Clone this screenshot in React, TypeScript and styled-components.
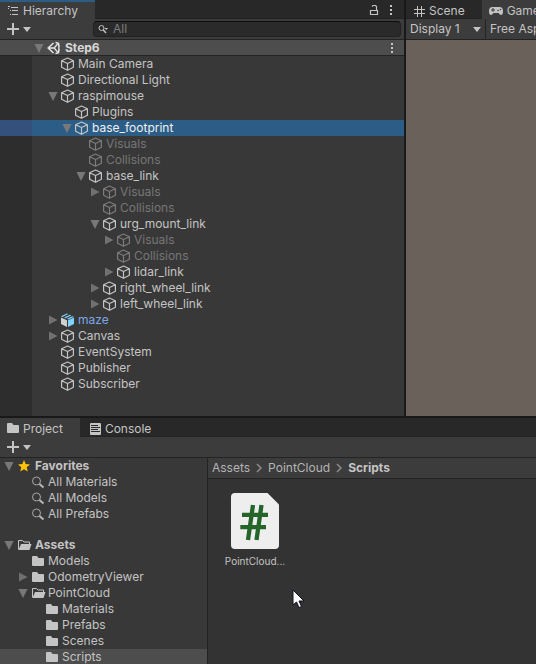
import React from "react";
import styled, { createGlobalStyle, css } from "styled-components";

const color = {
  frame: "#191919",
  tabBar: "#282828",
  toolbar: "#3c3c3c",
  panel: "#383838",
  gutter: "#2d2d2d",
  line: "#232323",
  text: "#c4c4c4",
  bright: "#d8d8d8",
  dim: "#767676",
  highlight: "#4d4d4d",
  selected: "#2c5d87",
  prefab: "#7ba6e6",
  game: "#6a615b",
};

const GlobalStyle = createGlobalStyle`
  * { box-sizing: border-box; }
  body {
    margin: 0;
    background: ${color.frame};
    color: ${color.text};
    font: 12px/16px Inter, "Liberation Sans", sans-serif;
  }
  button, input, select {
    font: inherit;
    color: inherit;
    border: 0;
    margin: 0;
    padding: 0;
    background: none;
  }
  ul { list-style: none; margin: 0; padding: 0; }
  svg { display: block; flex: none; }
`;

const Editor = styled.main`
  height: 100vh;
  overflow: hidden;
  display: flex;
  flex-direction: column;
  gap: 2px;
`;

const TopDock = styled.div`
  flex: none;
  display: grid;
  grid-template-columns: minmax(0, 1fr) 130px;
  gap: 2px;
`;

const Pane = styled.section`
  display: flex;
  flex-direction: column;
  min-width: 0;
  overflow: hidden;
  background: ${color.panel};
`;

const ProjectPane = styled(Pane)`
  flex: 1;
  min-height: 0;
`;

const TabBar = styled.div`
  display: flex;
  flex: none;
  height: 19px;
  background: ${color.tabBar};
  box-shadow: inset 0 -1px ${color.line};
`;

const Tab = styled.button<{ $active?: boolean; $focused?: boolean; $inset?: number }>`
  display: flex;
  align-items: center;
  flex: none;
  gap: 4px;
  padding: 3px 17px 0 ${(p) => p.$inset ?? 7}px;
  white-space: nowrap;
  ${(p) => p.$active && css`background: ${color.toolbar};`}
  ${(p) => p.$focused && css`box-shadow: inset 0 2px ${color.selected};`}
`;

const TabActions = styled.div`
  display: flex;
  align-items: center;
  gap: 10px;
  margin-left: auto;
  padding-right: 11px;
`;

const IconButton = styled.button`
  display: flex;
  align-items: center;
  gap: 4px;
`;

const Toolbar = styled.div`
  display: flex;
  align-items: center;
  justify-content: space-between;
  flex: none;
  gap: 62px;
  height: 21px;
  padding: 0 3px 0 7px;
  background: ${color.toolbar};
  border-bottom: 1px solid ${color.line};
`;

const SearchBox = styled.label`
  display: flex;
  align-items: center;
  gap: 5px;
  flex: 1;
  height: 16px;
  padding-left: 4px;
  border: 1px solid #212121;
  border-top-color: #0d0d0d;
  border-radius: 4px;
  background: #2a2a2a;
`;

const SearchInput = styled.input`
  flex: 1;
  min-width: 0;
  height: 14px;
  outline: 0;
  &::placeholder { color: #7d7d7d; opacity: 1; }
`;

const HierarchyTree = styled.ul`
  flex: 1;
  padding-bottom: 24px;
  background: linear-gradient(to right, ${color.gutter} 32px, ${color.panel} 32px);
`;

const Row = styled.li<{ $indent: number; $state?: "scene" | "selected" | "current" }>`
  display: flex;
  align-items: center;
  height: 16px;
  padding-left: ${(p) => p.$indent}px;
  padding-right: 10px;
  ${(p) => p.$state === "scene" && css`
    background: ${color.highlight};
    box-shadow: inset 0 -1px ${color.line};
  `}
  ${(p) => p.$state === "selected" && css`
    background: linear-gradient(to right, #34507c 32px, ${color.selected} 32px);
  `}
  ${(p) => p.$state === "current" && css`background: ${color.highlight};`}
`;

const FoldSlot = styled.span`
  display: flex;
  flex: none;
  width: 14px;
`;

const FoldButton = styled.button`
  display: flex;
  width: 14px;
  height: 16px;
  align-items: center;
  justify-content: center;
`;

const RowLabel = styled.button<{ $tone?: string; $bold?: boolean; $gap?: number }>`
  display: flex;
  align-items: center;
  flex: 1;
  gap: ${(p) => p.$gap ?? 2}px;
  height: 16px;
  white-space: nowrap;
  color: ${(p) => p.$tone ?? color.text};
  font-weight: ${(p) => (p.$bold ? 700 : 400)};
`;

const GameBar = styled.div`
  display: flex;
  flex: none;
  height: 21px;
  background: ${color.toolbar};
  border-bottom: 1px solid ${color.line};
`;

const Dropdown = styled.label<{ $width: number }>`
  display: flex;
  align-items: center;
  flex: none;
  width: ${(p) => p.$width}px;
  padding: 0 4px;
  border-right: 1px solid ${color.line};
`;

const Select = styled.select`
  appearance: none;
  flex: 1;
  min-width: 0;
  outline: 0;
`;

const GameView = styled.div`
  flex: 1;
  background: ${color.game};
`;

const ProjectBody = styled.div`
  flex: 1;
  min-height: 0;
  display: grid;
  grid-template-columns: 208px minmax(0, 1fr);
`;

const Folders = styled.nav`
  display: flex;
  flex-direction: column;
  gap: 15px;
  overflow: hidden;
  border-right: 1px solid ${color.line};
`;

const Browser = styled.div`
  display: flex;
  flex-direction: column;
  min-width: 0;
`;

const Breadcrumb = styled.nav`
  display: flex;
  align-items: center;
  flex: none;
  gap: 6px;
  height: 21px;
  padding-left: 4px;
  background: ${color.toolbar};
  border-bottom: 1px solid ${color.line};
`;

const Crumb = styled.a<{ $current?: boolean }>`
  color: ${(p) => (p.$current ? color.text : "#b4b4b4")};
  font-weight: ${(p) => (p.$current ? 700 : 400)};
  text-decoration: none;
`;

const Files = styled.div`
  position: relative;
  flex: 1;
  padding: 14px 15px;
  background: #333333;
`;

const FileTile = styled.button`
  display: flex;
  flex-direction: column;
  align-items: center;
  gap: 4px;
  width: 64px;
  font-size: 10px;
  white-space: nowrap;
`;

const Pointer = styled.svg`
  position: absolute;
  left: 84px;
  top: 110px;
`;

const Plus = () => (
  <svg width="12" height="12" viewBox="0 0 12 12">
    <path d="M6 0v12M0 6h12" stroke="#c4c4c4" strokeWidth="2" />
  </svg>
);

const Caret = () => (
  <svg width="8" height="5" viewBox="0 0 8 5">
    <path d="M0 0h8L4 5z" fill="#c4c4c4" />
  </svg>
);

const Dots = () => (
  <svg width="4" height="12" viewBox="0 0 4 12">
    <path d="M1 1h2v2H1zM1 5h2v2H1zM1 9h2v2H1z" fill="#c4c4c4" />
  </svg>
);

const LockIcon = () => (
  <svg width="10" height="12" viewBox="0 0 10 12">
    <path d="M1.500 6.500h7v4h-7zM7.500 6V2.500L6.500 1.500H4L3 2.500" fill="none" stroke="#c4c4c4" strokeWidth="1.200" />
  </svg>
);

const HierarchyIcon = () => (
  <svg width="12" height="12" viewBox="0 0 12 12">
    <path d="M1 1.500h2M4 2.500h7M3 5.500h1M5 5.500h6M3 9.500h1M5 9.500h6M1.500 3v1" fill="none" stroke="#c4c4c4" />
  </svg>
);

const SearchIcon = () => (
  <svg width="10" height="10" viewBox="0 0 10 10">
    <circle cx="3.500" cy="4" r="2.500" fill="none" stroke="#c4c4c4" />
    <path d="M5.300 6l2.700 3" stroke="#c4c4c4" strokeWidth="1.500" />
    <path d="M6.500 4h3.500L8.200 6z" fill="#c4c4c4" />
  </svg>
);

const Lens = () => (
  <svg width="16" height="16" viewBox="0 0 16 16">
    <circle cx="6.500" cy="7" r="4" fill="none" stroke="#a8a8a8" />
    <path d="M9.500 10l4 3.500" stroke="#b8b8b8" strokeWidth="2" />
  </svg>
);

const Triangle = ({ open }: { open: boolean }) => (
  <svg width="10" height="10" viewBox="0 0 10 10">
    <path d={open ? "M.5 1h9L5 10z" : "M1 .5v9L9.500 5z"} fill={open ? "#787878" : "#707070"} />
  </svg>
);

const Cube = ({ stroke }: { stroke: string }) => (
  <svg width="16" height="16" viewBox="0 0 16 16">
    <path d="M7.500 2L13.400 4.700v6.600L7.500 14.200 1.600 11.300V4.700zM1.600 4.700l5.900 2.800 5.900-2.800M7.500 7.500v6.700" fill="none" stroke={stroke} strokeWidth="1.200" strokeLinejoin="round" />
  </svg>
);

const PrefabCube = () => (
  <svg width="16" height="16" viewBox="0 0 16 16">
    <path d="M1 5.500l6 2.700V15l-6-3z" fill="#d0d0d0" />
    <path d="M8 8.200L14 5.500V12l-6 3z" fill="#7ed3ff" />
    <path d="M1 4.200L7 1.500l1.300.6L2.500 4.900zM4 5.500l6-2.700 1.300.6-5.800 2.800zM7 6.800l5.300-2.600 1.700.6-5.500 2.700z" fill="#7ed3ff" />
  </svg>
);

const UnityLogo = () => (
  <svg width="16" height="16" viewBox="0 0 16 16">
    <path d="M7.500 3L2.200 8l5.300 5M9.500 2.600l3 .7.400 3.200M9.500 13.400l3-.7.400-3.200" fill="none" stroke="#e8e8e8" strokeWidth="1.500" />
    <path d="M2.500 8h5.700M8.200 8l3.900-4.700M8.200 8l3.900 4.700M12.900 5.500v5" fill="none" stroke="#e8e8e8" strokeWidth="1.300" />
  </svg>
);

const Star = () => (
  <svg width="16" height="16" viewBox="0 0 16 16">
    <path d="M8 2l1.700 4.100 4.300.3-3.300 2.800 1.100 4.300L8 11.200l-3.800 2.300 1.100-4.300L2 6.400l4.300-.3z" fill="#ffc107" />
  </svg>
);

const Folder = ({ size = 16 }: { size?: number }) => (
  <svg width={size} height="16" viewBox={size === 16 ? "0 0 16 16" : "2 1 12 16"}>
    <path d="M2 4q0-1 1-1h4l1.500 2H13q1 0 1 1v6q0 1-1 1H3q-1 0-1-1z" fill="#c4c4c4" />
  </svg>
);

const OpenFolder = () => (
  <svg width="16" height="16" viewBox="0 0 16 16">
    <path d="M2.500 12.500v-9h4L8 5h5.500v2" fill="none" stroke="#c4c4c4" />
    <path d="M5 7h10.500l-2 6H2.500z" fill="#c4c4c4" />
  </svg>
);

const ConsoleIcon = () => (
  <svg width="11" height="12" viewBox="0 0 11 12">
    <rect width="11" height="12" rx="1" fill="#c4c4c4" />
    <path d="M1 2.500h7M1 4.500h9M1 6.500h7M1 8.500h9" stroke="#282828" />
  </svg>
);

const GridIcon = () => (
  <svg width="12" height="12" viewBox="0 0 12 12">
    <path d="M4.500 1v11M8.500 1v11M1 4.500h11M1 8.500h11" stroke="#c4c4c4" />
  </svg>
);

const Gamepad = () => (
  <svg width="14" height="10" viewBox="0 0 14 10">
    <path d="M3.500 1h7Q14 1 14 5t-2 4q-1 0-2.500-2h-5Q3 9 2 9 0 9 0 5t3.500-4z" fill="#c4c4c4" />
    <path d="M2 4h4M4 2v4" stroke="#3c3c3c" />
    <circle cx="9" cy="4.500" r=".8" fill="#3c3c3c" />
    <circle cx="11.500" cy="3.500" r=".8" fill="#3c3c3c" />
  </svg>
);

const Chevron = () => (
  <svg width="6" height="10" viewBox="0 0 6 10">
    <path d="M1 1l4 4-4 4" fill="none" stroke="#8c8c8c" strokeWidth="1.500" />
  </svg>
);

const ScriptIcon = () => (
  <svg width="48" height="56" viewBox="0 0 48 56">
    <path d="M4 0h32.500L48 11.500V52q0 4-4 4H4q-4 0-4-4V4q0-4 4-4z" fill="#eeeeee" />
    <path d="M22 12L17 47M30.500 12L25.500 47M11 21.800H37M9.300 34.200H35" fill="none" stroke="#256529" strokeWidth="4.300" />
  </svg>
);

type Node = { name: string; depth: number; fold?: "open" | "closed"; kind?: "dim" | "prefab" | "selected" };

const sceneNodes: Node[] = [
  { name: "Main Camera", depth: 1 },
  { name: "Directional Light", depth: 1 },
  { name: "raspimouse", depth: 1, fold: "open" },
  { name: "Plugins", depth: 2 },
  { name: "base_footprint", depth: 2, fold: "open", kind: "selected" },
  { name: "Visuals", depth: 3, kind: "dim" },
  { name: "Collisions", depth: 3, kind: "dim" },
  { name: "base_link", depth: 3, fold: "open" },
  { name: "Visuals", depth: 4, fold: "closed", kind: "dim" },
  { name: "Collisions", depth: 4, kind: "dim" },
  { name: "urg_mount_link", depth: 4, fold: "open" },
  { name: "Visuals", depth: 5, fold: "closed", kind: "dim" },
  { name: "Collisions", depth: 5, kind: "dim" },
  { name: "lidar_link", depth: 5, fold: "closed" },
  { name: "right_wheel_link", depth: 4, fold: "closed" },
  { name: "left_wheel_link", depth: 4, fold: "closed" },
  { name: "maze", depth: 1, fold: "closed", kind: "prefab" },
  { name: "Canvas", depth: 1, fold: "closed" },
  { name: "EventSystem", depth: 1 },
  { name: "Publisher", depth: 1 },
  { name: "Subscriber", depth: 1 },
];

const tones = { dim: color.dim, prefab: color.prefab, selected: "#f0f0f0" };

const assetNodes: Node[] = [
  { name: "Models", depth: 1 },
  { name: "OdometryViewer", depth: 1, fold: "closed" },
  { name: "PointCloud", depth: 1, fold: "open" },
  { name: "Materials", depth: 2 },
  { name: "Prefabs", depth: 2 },
  { name: "Scenes", depth: 2 },
  { name: "Scripts", depth: 2, kind: "selected" },
];

function Fold({ state, name }: { state?: "open" | "closed"; name: string }) {
  return (
    <FoldSlot>
      {state && (
        <FoldButton aria-label={`Toggle ${name}`} aria-expanded={state === "open"}>
          <Triangle open={state === "open"} />
        </FoldButton>
      )}
    </FoldSlot>
  );
}

function Hierarchy() {
  return (
    <Pane>
      <TabBar>
        <Tab $active $focused>
          <HierarchyIcon />
          Hierarchy
        </Tab>
        <TabActions>
          <IconButton aria-label="Lock"><LockIcon /></IconButton>
          <IconButton aria-label="Panel menu"><Dots /></IconButton>
        </TabActions>
      </TabBar>
      <Toolbar>
        <IconButton aria-label="Create"><Plus /><Caret /></IconButton>
        <SearchBox>
          <SearchIcon />
          <SearchInput aria-label="Search hierarchy" placeholder="All" />
        </SearchBox>
      </Toolbar>
      <HierarchyTree>
        <Row $indent={32} $state="scene">
          <Fold state="open" name="Step6" />
          <RowLabel $bold $gap={3} $tone={color.bright}><UnityLogo />Step6</RowLabel>
          <IconButton aria-label="Scene menu"><Dots /></IconButton>
        </Row>
        {sceneNodes.map((n, i) => {
          const tone = n.kind ? tones[n.kind] : color.text;
          return (
            <Row key={i} $indent={32 + 14 * n.depth} $state={n.kind === "selected" ? "selected" : undefined}>
              <Fold state={n.fold} name={n.name} />
              <RowLabel $tone={tone}>
                {n.kind === "prefab" ? <PrefabCube /> : <Cube stroke={n.kind === "dim" ? "#7c7c7c" : "#c4c4c4"} />}
                {n.name}
              </RowLabel>
            </Row>
          );
        })}
      </HierarchyTree>
    </Pane>
  );
}

function Game() {
  return (
    <Pane>
      <TabBar>
        <Tab><GridIcon />Scene</Tab>
        <Tab $active><Gamepad />Game</Tab>
      </TabBar>
      <GameBar>
        <Dropdown $width={80}>
          <Select aria-label="Display"><option>Display 1</option></Select>
          <Caret />
        </Dropdown>
        <Dropdown $width={120}>
          <Select aria-label="Aspect ratio"><option>Free Aspect</option></Select>
          <Caret />
        </Dropdown>
      </GameBar>
      <GameView />
    </Pane>
  );
}

function Project() {
  return (
    <ProjectPane>
      <TabBar>
        <Tab $active><Folder size={12} />Project</Tab>
        <Tab $inset={10}><ConsoleIcon />Console</Tab>
      </TabBar>
      <Toolbar>
        <IconButton aria-label="Create asset"><Plus /><Caret /></IconButton>
      </Toolbar>
      <ProjectBody>
        <Folders aria-label="Folders">
          <ul>
            <Row $indent={2}>
              <Fold state="open" name="Favorites" />
              <RowLabel $bold $gap={3}><Star />Favorites</RowLabel>
            </Row>
            {["All Materials", "All Models", "All Prefabs"].map((name) => (
              <Row key={name} $indent={16}>
                <Fold name={name} />
                <RowLabel><Lens />{name}</RowLabel>
              </Row>
            ))}
          </ul>
          <ul>
            <Row $indent={2}>
              <Fold state="open" name="Assets" />
              <RowLabel $bold $gap={3}><OpenFolder />Assets</RowLabel>
            </Row>
            {assetNodes.map((n) => (
              <Row key={n.name} $indent={2 + 14 * n.depth} $state={n.kind === "selected" ? "current" : undefined}>
                <Fold state={n.fold} name={n.name} />
                <RowLabel>{n.fold === "open" ? <OpenFolder /> : <Folder />}{n.name}</RowLabel>
              </Row>
            ))}
          </ul>
        </Folders>
        <Browser>
          <Breadcrumb aria-label="Path">
            <Crumb href="#assets">Assets</Crumb>
            <Chevron />
            <Crumb href="#pointcloud">PointCloud</Crumb>
            <Chevron />
            <Crumb href="#scripts" $current>Scripts</Crumb>
          </Breadcrumb>
          <Files>
            <FileTile><ScriptIcon />PointCloud...</FileTile>
            <Pointer width="14" height="20" viewBox="0 0 14 20">
              <path d="M1 1v15l3.500-3 2.500 5.500 2.500-1L7 12h5z" fill="#fff" stroke="#101020" strokeLinejoin="round" />
            </Pointer>
          </Files>
        </Browser>
      </ProjectBody>
    </ProjectPane>
  );
}

export default function App() {
  return (
    <>
      <GlobalStyle />
      <Editor>
        <TopDock>
          <Hierarchy />
          <Game />
        </TopDock>
        <Project />
      </Editor>
    </>
  );
}
